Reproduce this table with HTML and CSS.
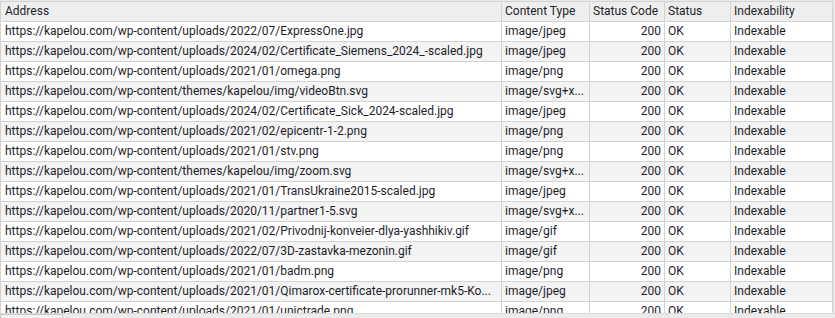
FILE: index.html
```html
<!DOCTYPE html>
<html lang="en">
<head>
<meta charset="utf-8">
<title>Internal - Images</title>
<link rel="stylesheet" href="styles.css">
</head>
<body>
<div class="frame">
  <div class="viewport">
    <div class="grid">
      <div class="row head">
        <div class="cell">Address</div>
        <div class="cell">Content Type</div>
        <div class="cell">Status Code</div>
        <div class="cell">Status</div>
        <div class="cell">Indexability</div>
      </div>
      <div class="row">
        <div class="cell">https://kapelou.com/wp-content/uploads/2022/07/ExpressOne.jpg</div>
        <div class="cell">image/jpeg</div>
        <div class="cell num">200</div>
        <div class="cell">OK</div>
        <div class="cell">Indexable</div>
      </div>
      <div class="row">
        <div class="cell">https://kapelou.com/wp-content/uploads/2024/02/Certificate_Siemens_2024_-scaled.jpg</div>
        <div class="cell">image/jpeg</div>
        <div class="cell num">200</div>
        <div class="cell">OK</div>
        <div class="cell">Indexable</div>
      </div>
      <div class="row">
        <div class="cell">https://kapelou.com/wp-content/uploads/2021/01/omega.png</div>
        <div class="cell">image/png</div>
        <div class="cell num">200</div>
        <div class="cell">OK</div>
        <div class="cell">Indexable</div>
      </div>
      <div class="row">
        <div class="cell">https://kapelou.com/wp-content/themes/kapelou/img/videoBtn.svg</div>
        <div class="cell">image/svg+x...</div>
        <div class="cell num">200</div>
        <div class="cell">OK</div>
        <div class="cell">Indexable</div>
      </div>
      <div class="row">
        <div class="cell">https://kapelou.com/wp-content/uploads/2024/02/Certificate_Sick_2024-scaled.jpg</div>
        <div class="cell">image/jpeg</div>
        <div class="cell num">200</div>
        <div class="cell">OK</div>
        <div class="cell">Indexable</div>
      </div>
      <div class="row">
        <div class="cell">https://kapelou.com/wp-content/uploads/2021/02/epicentr-1-2.png</div>
        <div class="cell">image/png</div>
        <div class="cell num">200</div>
        <div class="cell">OK</div>
        <div class="cell">Indexable</div>
      </div>
      <div class="row">
        <div class="cell">https://kapelou.com/wp-content/uploads/2021/01/stv.png</div>
        <div class="cell">image/png</div>
        <div class="cell num">200</div>
        <div class="cell">OK</div>
        <div class="cell">Indexable</div>
      </div>
      <div class="row">
        <div class="cell">https://kapelou.com/wp-content/themes/kapelou/img/zoom.svg</div>
        <div class="cell">image/svg+x...</div>
        <div class="cell num">200</div>
        <div class="cell">OK</div>
        <div class="cell">Indexable</div>
      </div>
      <div class="row">
        <div class="cell">https://kapelou.com/wp-content/uploads/2021/01/TransUkraine2015-scaled.jpg</div>
        <div class="cell">image/jpeg</div>
        <div class="cell num">200</div>
        <div class="cell">OK</div>
        <div class="cell">Indexable</div>
      </div>
      <div class="row">
        <div class="cell">https://kapelou.com/wp-content/uploads/2020/11/partner1-5.svg</div>
        <div class="cell">image/svg+x...</div>
        <div class="cell num">200</div>
        <div class="cell">OK</div>
        <div class="cell">Indexable</div>
      </div>
      <div class="row">
        <div class="cell">https://kapelou.com/wp-content/uploads/2021/02/Privodnij-konveier-dlya-yashhikiv.gif</div>
        <div class="cell">image/gif</div>
        <div class="cell num">200</div>
        <div class="cell">OK</div>
        <div class="cell">Indexable</div>
      </div>
      <div class="row">
        <div class="cell">https://kapelou.com/wp-content/uploads/2022/07/3D-zastavka-mezonin.gif</div>
        <div class="cell">image/gif</div>
        <div class="cell num">200</div>
        <div class="cell">OK</div>
        <div class="cell">Indexable</div>
      </div>
      <div class="row">
        <div class="cell">https://kapelou.com/wp-content/uploads/2021/01/badm.png</div>
        <div class="cell">image/png</div>
        <div class="cell num">200</div>
        <div class="cell">OK</div>
        <div class="cell">Indexable</div>
      </div>
      <div class="row">
        <div class="cell">https://kapelou.com/wp-content/uploads/2021/01/Qimarox-certificate-prorunner-mk5-Ko...</div>
        <div class="cell">image/jpeg</div>
        <div class="cell num">200</div>
        <div class="cell">OK</div>
        <div class="cell">Indexable</div>
      </div>
      <div class="row">
        <div class="cell">https://kapelou.com/wp-content/uploads/2021/01/unictrade.png</div>
        <div class="cell">image/png</div>
        <div class="cell num">200</div>
        <div class="cell">OK</div>
        <div class="cell">Indexable</div>
      </div>
    </div>
  </div>
  <div class="hscroll"><div class="thumb"></div></div>
</div>
</body>
</html>
```

FILE: styles.css
```css
* { box-sizing: border-box; }
html, body {
  margin: 0;
  padding: 0;
  background: #ececec;
}
body {
  font-family: Roboto, "Liberation Sans", Arial, sans-serif;
  font-size: 12px;
  color: #1e1e2a;
}
.frame {
  width: 835px;
  height: 318px;
  display: flex;
  flex-direction: column;
  background: #e9e9e9;
  padding-top: 1px;
  overflow: hidden;
}
.viewport {
  height: 312px;
  overflow: hidden;
  flex: none;
}
.grid {
  width: 833px;
  border-left: 1px solid #d3d3d3;
  border-top: 1px solid #d3d3d3;
}
.row {
  display: grid;
  grid-template-columns: 501px 88px 75px 66px 102px;
  height: 20px;
  background: #ffffff;
}
.row:nth-child(odd) {
  background: #f3f3f3;
}
.row.head {
  height: 20px;
  background: #eeeeee;
}
.cell {
  border-right: 1px solid #d3d3d3;
  border-bottom: 1px solid #d3d3d3;
  padding: 0 3px 0 3px;
  line-height: 19px;
  white-space: nowrap;
  overflow: hidden;
}
.row .cell:first-child {
  padding-left: 4px;
}
.cell.num {
  text-align: right;
}
.hscroll {
  height: 5px;
  flex: none;
  background: #ebebeb;
  border-top: 1px solid #dadada;
}
.thumb {
  width: 63px;
  height: 6px;
  background: #f3f3f3;
  border: 1px solid #c9c9c9;
}
```
